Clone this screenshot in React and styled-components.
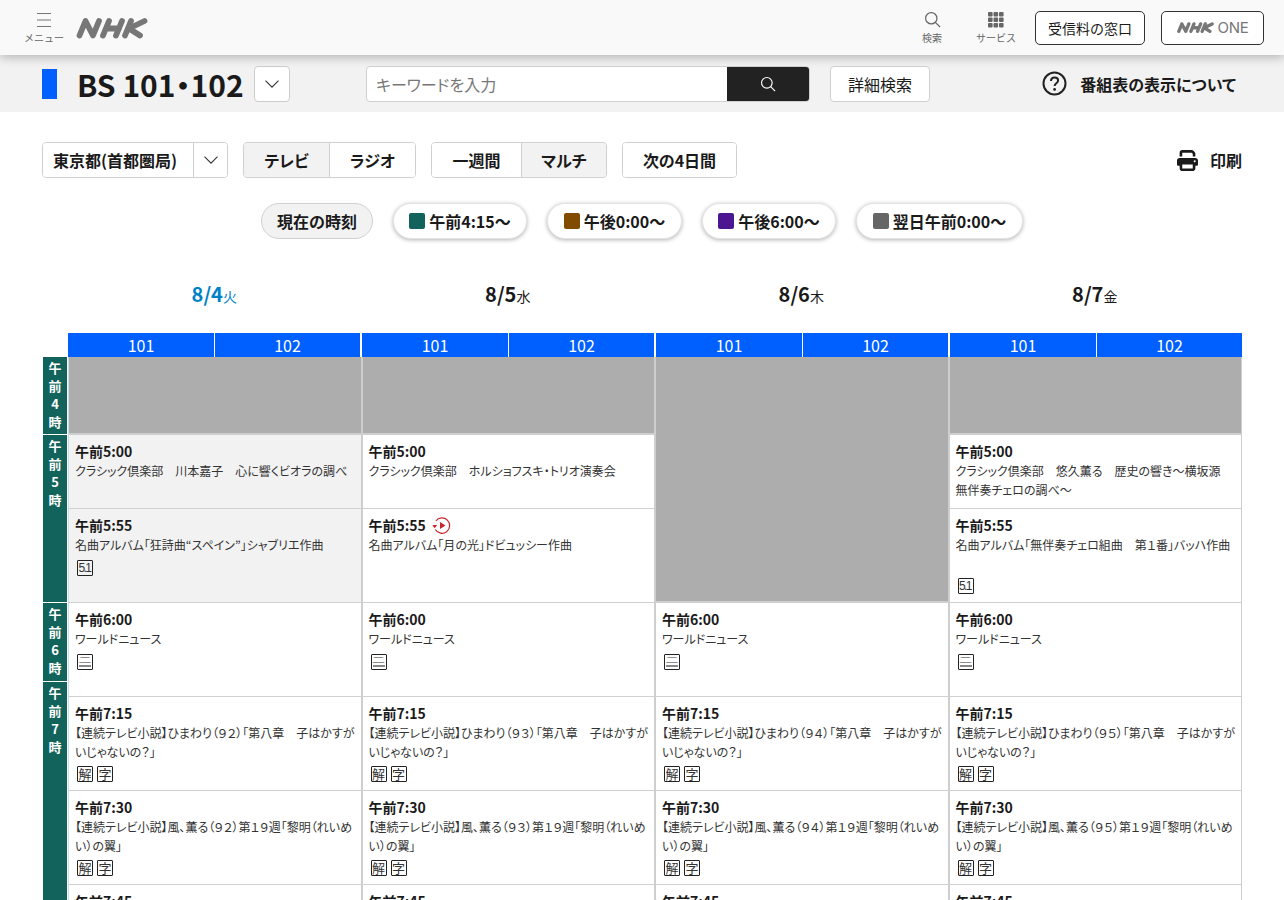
import React from 'react';
import styled, { createGlobalStyle } from 'styled-components';

const Global = createGlobalStyle`
  html, body { margin: 0; padding: 0; background: #fff; }
  body {
    font-family: "Noto Sans CJK JP", "Noto Sans", sans-serif;
    color: #1a1a1a;
    font-feature-settings: "palt";
  }
  * { box-sizing: border-box; }
`;

const Page = styled.div`
  width: 1284px;
  height: 900px;
  overflow: hidden;
  position: relative;
`;

const TopBar = styled.header`
  height: 55px;
  background: #f9f9f9;
  box-shadow: 0 2px 10px rgba(0, 0, 0, 0.28);
  display: flex;
  align-items: center;
  padding: 0 20px 0 24px;
  position: relative;
  z-index: 2;
`;

const MenuButton = styled.div`
  width: 40px;
  display: flex;
  flex-direction: column;
  align-items: center;
  gap: 4px;
  color: #666;
`;

const TinyLabel = styled.span`
  font-size: 10px;
  line-height: 12px;
  color: #666;
  white-space: nowrap;
  font-feature-settings: normal;
`;

const LogoWrap = styled.div`
  margin-left: 12px;
  width: 72px;
  height: 24px;
`;

const TopSpacer = styled.div`
  flex: 1;
`;

const TopAction = styled.div`
  display: flex;
  flex-direction: column;
  align-items: center;
  gap: 4px;
  width: 40px;
  margin-right: ${(p) => p.$gap}px;
`;

const OutlineLink = styled.div`
  height: 34px;
  width: ${(p) => p.$w}px;
  margin-left: ${(p) => p.$ml || 0}px;
  border: 1px solid #333;
  border-radius: 5px;
  background: #fff;
  display: flex;
  align-items: center;
  justify-content: center;
  gap: 4px;
  font-size: 14px;
  color: #1a1a1a;
  font-feature-settings: normal;
`;

const OneText = styled.span`
  color: #777;
  font-family: "Inter", sans-serif;
  font-size: 15px;
  letter-spacing: -0.3px;
`;

const SubBar = styled.div`
  height: 57px;
  background: #f2f2f2;
  display: flex;
  align-items: center;
  padding: 0 48px 0 42px;
`;

const ChannelMark = styled.div`
  width: 15px;
  height: 30px;
  background: #0060ff;
`;

const ChannelTitle = styled.h1`
  margin: 0 0 0 20px;
  font-size: 30px;
  font-weight: 700;
  line-height: 36px;
  white-space: nowrap;
  width: 177px;
`;

const ChannelSelect = styled.div`
  width: 36px;
  height: 36px;
  background: #fff;
  border: 1px solid #ccc;
  border-radius: 4px;
  display: flex;
  align-items: center;
  justify-content: center;
`;

const SearchBox = styled.div`
  margin-left: 76px;
  width: 444px;
  height: 36px;
  display: flex;
  background: #fff;
  border: 1px solid #d0d0d0;
  border-radius: 4px;
  overflow: hidden;
`;

const SearchPlaceholder = styled.div`
  flex: 1;
  font-size: 16px;
  line-height: 34px;
  padding-left: 9px;
  color: #777;
`;

const SearchButton = styled.div`
  width: 82px;
  background: #222;
  display: flex;
  align-items: center;
  justify-content: center;
`;

const DetailButton = styled.div`
  margin-left: 20px;
  width: 100px;
  height: 36px;
  background: #fff;
  border: 1px solid #d0d0d0;
  border-radius: 4px;
  font-size: 16px;
  display: flex;
  align-items: center;
  justify-content: center;
`;

const HelpLink = styled.div`
  margin-left: auto;
  display: flex;
  align-items: center;
  gap: 13px;
  font-size: 16px;
  font-weight: 700;
`;

const Toolbar = styled.div`
  margin-top: 30px;
  padding: 0 42px;
  height: 36px;
  display: flex;
  align-items: stretch;
`;

const Segment = styled.div`
  display: flex;
  border: 1px solid #d0d0d0;
  border-radius: 4px;
  margin-right: ${(p) => p.$mr}px;
  overflow: hidden;
  background: #fff;
`;

const SegmentItem = styled.div`
  width: ${(p) => p.$w}px;
  padding-right: ${(p) => p.$pr || 0}px;
  display: flex;
  align-items: center;
  justify-content: center;
  font-size: 16px;
  font-weight: 700;
  background: ${(p) => (p.$active ? '#f2f2f2' : '#fff')};
  & + & {
    border-left: 1px solid #d0d0d0;
  }
`;

const PrintLink = styled.div`
  margin-left: auto;
  display: flex;
  align-items: center;
  gap: 12px;
  font-size: 16px;
  font-weight: 700;
`;

const PillRow = styled.div`
  margin-top: 25px;
  display: flex;
  justify-content: center;
  gap: 20px;
  height: 36px;
`;

const Pill = styled.div`
  height: 36px;
  width: ${(p) => p.$w}px;
  border-radius: 18px;
  display: flex;
  align-items: center;
  justify-content: center;
  gap: 4px;
  font-size: 16px;
  font-weight: 700;
  white-space: nowrap;
  background: ${(p) => (p.$now ? '#f2f2f2' : '#fff')};
  border: 1px solid ${(p) => (p.$now ? '#d0d0d0' : '#e4e4e4')};
  box-shadow: ${(p) => (p.$now ? 'none' : '0 1px 4px rgba(0,0,0,0.3)')};
`;

const Swatch = styled.span`
  width: 16px;
  height: 16px;
  border-radius: 2px;
  background: ${(p) => p.$c};
`;

const DateRow = styled.div`
  margin: 42px 42px 0 67.5px;
  height: 25px;
  display: grid;
  grid-template-columns: repeat(4, 293.5px);
`;

const DateLabel = styled.div`
  text-align: center;
  font-size: 20px;
  font-weight: 700;
  line-height: 25px;
  color: ${(p) => (p.$today ? '#0082c8' : '#1a1a1a')};
`;

const DateWeek = styled.span`
  font-size: 14px;
  font-weight: 400;
`;

const ChannelRow = styled.div`
  margin: 27px 42px 0 68px;
  height: 24px;
  display: grid;
  grid-template-columns: repeat(4, 292px);
  gap: 2px;
`;

const ChannelPair = styled.div`
  display: grid;
  grid-template-columns: 146px 146px;
  background: #0060ff;
`;

const ChannelCell = styled.div`
  color: #fff;
  font-size: 16px;
  line-height: 24px;
  text-align: center;
  & + & {
    border-left: 1px solid #fff;
  }
`;

const Schedule = styled.div`
  margin-left: 43px;
  display: flex;
  align-items: flex-start;
`;

const HourColumn = styled.div`
  width: 24px;
  margin-right: 1px;
  display: flex;
  flex-direction: column;
  gap: 1px;
  flex: none;
`;

const HourBlock = styled.div`
  height: ${(p) => p.$h}px;
  background: #12635b;
  color: #fff;
  font-size: 13px;
  font-weight: 700;
  line-height: 18px;
  text-align: center;
  padding-top: 2px;
`;

const HourChar = styled.div`
  display: block;
`;

const DayColumn = styled.div`
  width: 293.5px;
  flex: none;
  border-left: 1px solid ${(p) => (p.$first ? '#c6dfe0' : '#cecece')};
  border-right: 1px solid #cecece;
  display: flex;
  flex-direction: column;
`;

const Blank = styled.div`
  height: ${(p) => p.$h}px;
  background: #adadad;
  border-bottom: 2px solid #cecece;
`;

const Program = styled.div`
  height: ${(p) => p.$h}px;
  background: ${(p) => (p.$past ? '#f2f2f2' : '#fff')};
  border-bottom: 1px solid #d0d0d0;
  padding: 6px 5px 0 6px;
`;

const TimeLine = styled.div`
  display: flex;
  align-items: center;
  gap: 6px;
  font-size: 14px;
  font-weight: 700;
  line-height: 21px;
  height: 21px;
`;

const Title = styled.div`
  font-size: 12px;
  line-height: 18.6px;
  color: #333;
`;

const BadgeRow = styled.div`
  display: flex;
  gap: 4px;
  margin: ${(p) => p.$mt ?? 5}px 0 0 2px;
`;

const Badge = styled.span`
  width: 16px;
  height: 16px;
  border: 1px solid #222;
  border-radius: 1px;
  font-size: 13px;
  line-height: 14px;
  color: #333;
  display: inline-flex;
  align-items: center;
  justify-content: center;
  position: relative;
  font-feature-settings: normal;
`;

const BadgeSmall = styled(Badge)`
  font-size: 12px;
  letter-spacing: -1.6px;
  padding-right: 1px;
  font-family: "Liberation Sans", sans-serif;
`;

const BadgeTwo = styled(Badge)`
  align-items: flex-start;
`;

const BadgeTwoGlyph = styled.span`
  display: block;
  font-size: 13px;
  line-height: 13px;
  margin-top: 1px;
  transform: scaleY(0.5);
  transform-origin: top center;
`;

const BadgeRule = styled.span`
  position: absolute;
  left: 1px;
  right: 1px;
  bottom: 2px;
  height: 2px;
  background: #888;
`;

const Chevron = ({ size = 16 }) => (
  <svg width={size} height={size} viewBox="0 0 16 16" fill="none" stroke="#333" strokeWidth="1.1">
    <path d="M1.500 4.700 8 11.200l6.500-6.500" />
  </svg>
);

const SearchIcon = ({ color, size }) => (
  <svg width={size} height={size} viewBox="0 0 18 18" fill="none" stroke={color} strokeWidth="1.3">
    <circle cx="7.700" cy="7.700" r="6" />
    <path d="m12 12 5 5" />
  </svg>
);

const nhkPaths = (
  <>
    <path d="M3.500 19.500 9.500 5 17 19.500 23 5" />
    <path d="M33 5 27 19.500M46 5 40 19.500M30 12.500h13" />
    <path d="M55 5 49 19.500M68.500 5 53 12.500 64 19.500" />
  </>
);

const NhkLogo = () => (
  <svg width="72" height="24" viewBox="0 0 72 24" fill="none" stroke="#777" strokeWidth="5.800" strokeLinecap="round" strokeLinejoin="round">
    {nhkPaths}
  </svg>
);

const SmallNhkLogo = () => (
  <svg width="37" height="13" viewBox="0 0 72 24" fill="none" stroke="#777" strokeWidth="6.500" strokeLinecap="round" strokeLinejoin="round">
    {nhkPaths}
  </svg>
);

const GridIcon = () => (
  <svg width="16" height="16" viewBox="0 0 16 16" fill="#666">
    {[0, 5.5, 11].flatMap((y) =>
      [0, 5.5, 11].map((x) => <rect key={`${x}-${y}`} x={x} y={y} width="4.600" height="4.600" rx="1" />)
    )}
  </svg>
);

const HamburgerIcon = () => (
  <svg width="16" height="16" viewBox="0 0 16 16" stroke="#777" strokeWidth="1.200">
    <path d="M1 1.500h14M1 8h14M1 14.500h14" />
  </svg>
);

const HelpIcon = () => (
  <svg width="25" height="25" viewBox="0 0 25 25" fill="none">
    <circle cx="12.500" cy="12.500" r="11" stroke="#222" strokeWidth="2" />
    <path d="M9 10c0-2.200 1.600-3.500 3.600-3.500 2 0 3.500 1.200 3.500 3 0 2.800-3.500 2.800-3.500 5.600" stroke="#222" strokeWidth="2" />
    <circle cx="12.600" cy="18.400" r="1.400" fill="#222" />
  </svg>
);

const PrintIcon = () => (
  <svg width="21" height="21" viewBox="0 0 512 512" fill="#1a1a1a">
    <path d="M128 0C92.700 0 64 28.700 64 64v96h64V64h226.700L384 93.300V160h64V93.300c0-17-6.700-33.300-18.700-45.300L400 18.700C388 6.700 371.700 0 354.700 0H128zM384 352v96H128v-96h256zm64 32h32c17.700 0 32-14.300 32-32V256c0-35.300-28.700-64-64-64H64c-35.300 0-64 28.700-64 64v96c0 17.700 14.300 32 32 32h32v64c0 35.300 28.700 64 64 64h256c35.300 0 64-28.700 64-64v-64zm-16-136a24 24 0 1 1 0 48 24 24 0 1 1 0-48z" />
  </svg>
);

const ReplayIcon = () => (
  <svg width="19" height="19" viewBox="0 0 19 19" fill="none">
    <path d="M3.800 5A7.700 7.700 0 1 1 3.300 13.500" stroke="#c8242b" strokeWidth="1.200" />
    <path d="M.3 9h4.800L2.700 12.200z" fill="#c8242b" />
    <path d="M8 6l5.500 3.500L8 13z" fill="#c8242b" />
  </svg>
);

const Mark = ({ k }) => {
  if (k === '5.1') return <BadgeSmall>5.1</BadgeSmall>;
  if (k === '二') return <BadgeTwo><BadgeTwoGlyph>二</BadgeTwoGlyph><BadgeRule /></BadgeTwo>;
  return <Badge>{k}</Badge>;
};

const Prog = ({ h, past, time, title, marks, mt, replay }) => (
  <Program $h={h} $past={past}>
    <TimeLine>
      {time}
      {replay && <ReplayIcon />}
    </TimeLine>
    <Title>{title}</Title>
    {marks && (
      <BadgeRow $mt={mt}>
        {marks.map((m) => (
          <Mark key={m} k={m} />
        ))}
      </BadgeRow>
    )}
  </Program>
);

const hours = [
  { h: 77, t: '午前4時'.split('') },
  { h: 167, t: '午前5時'.split('') },
  { h: 78, t: '午前6時'.split('') },
  { h: 260, t: '午前7時'.split('') },
];

const himawari = (n) => `【連続テレビ小説】ひまわり（${n}）「第八章　子はかすがいじゃないの？」`;
const kaoru = (n) => `【連続テレビ小説】風、薫る（${n}）第１９週「黎明（れいめい）の翼」`;

const morning = (a) => (
  <>
    <Prog h={94} time="午前6:00" title="ワールドニュース" marks={['二']} />
    <Prog h={94} time="午前7:15" title={himawari(a)} marks={['解', '字']} />
    <Prog h={94} time="午前7:30" title={kaoru(a)} marks={['解', '字']} />
    <Prog h={94} time="午前7:45" title="" />
  </>
);

const days = [
  {
    first: true,
    n: '９２',
    top: (
      <>
        <Blank $h={78} />
        <Prog h={74} past time="午前5:00" title="クラシック倶楽部　川本嘉子　心に響くビオラの調べ" />
        <Prog h={94} past time="午前5:55" title="名曲アルバム「狂詩曲“スペイン”」シャブリエ作曲" marks={['5.1']} />
      </>
    ),
  },
  {
    n: '９３',
    top: (
      <>
        <Blank $h={78} />
        <Prog h={74} time="午前5:00" title="クラシック倶楽部　ホルショフスキ・トリオ演奏会" />
        <Prog h={94} replay time="午前5:55" title="名曲アルバム「月の光」ドビュッシー作曲" />
      </>
    ),
  },
  { n: '９４', top: <Blank $h={246} /> },
  {
    n: '９５',
    top: (
      <>
        <Blank $h={78} />
        <Prog h={74} time="午前5:00" title="クラシック倶楽部　悠久薫る　歴史の響き～横坂源　無伴奏チェロの調べ～" />
        <Prog h={94} time="午前5:55" title="名曲アルバム「無伴奏チェロ組曲　第１番」バッハ作曲" marks={['5.1']} mt={23} />
      </>
    ),
  },
];

const dates = [
  ['8/4', '火', true],
  ['8/5', '水'],
  ['8/6', '木'],
  ['8/7', '金'],
];

export default function App() {
  return (
    <Page>
      <Global />
      <TopBar>
        <MenuButton>
          <HamburgerIcon />
          <TinyLabel>メニュー</TinyLabel>
        </MenuButton>
        <LogoWrap>
          <NhkLogo />
        </LogoWrap>
        <TopSpacer />
        <TopAction $gap={24}>
          <SearchIcon color="#666" size={17} />
          <TinyLabel>検索</TinyLabel>
        </TopAction>
        <TopAction $gap={0}>
          <GridIcon />
          <TinyLabel>サービス</TinyLabel>
        </TopAction>
        <OutlineLink $w={110} $ml={19}>受信料の窓口</OutlineLink>
        <OutlineLink $w={103} $ml={16}>
          <SmallNhkLogo />
          <OneText>ONE</OneText>
        </OutlineLink>
      </TopBar>
      <SubBar>
        <ChannelMark />
        <ChannelTitle>BS 101・102</ChannelTitle>
        <ChannelSelect>
          <Chevron />
        </ChannelSelect>
        <SearchBox>
          <SearchPlaceholder>キーワードを入力</SearchPlaceholder>
          <SearchButton>
            <SearchIcon color="#fff" size={16} />
          </SearchButton>
        </SearchBox>
        <DetailButton>詳細検索</DetailButton>
        <HelpLink>
          <HelpIcon />
          番組表の表示について
        </HelpLink>
      </SubBar>
      <Toolbar>
        <Segment $mr={15}>
          <SegmentItem $w={150} $pr={6}>東京都(首都圏局)</SegmentItem>
          <SegmentItem $w={34}>
            <Chevron />
          </SegmentItem>
        </Segment>
        <Segment $mr={15}>
          <SegmentItem $w={85} $active>テレビ</SegmentItem>
          <SegmentItem $w={86}>ラジオ</SegmentItem>
        </Segment>
        <Segment $mr={15}>
          <SegmentItem $w={89}>一週間</SegmentItem>
          <SegmentItem $w={85} $active>マルチ</SegmentItem>
        </Segment>
        <Segment $mr={0}>
          <SegmentItem $w={113}>次の4日間</SegmentItem>
        </Segment>
        <PrintLink>
          <PrintIcon />
          印刷
        </PrintLink>
      </Toolbar>
      <PillRow>
        <Pill $now $w={112}>現在の時刻</Pill>
        <Pill $w={134}>
          <Swatch $c="#12635b" />
          午前4:15～
        </Pill>
        <Pill $w={135}>
          <Swatch $c="#824c00" />
          午後0:00～
        </Pill>
        <Pill $w={134}>
          <Swatch $c="#4c1690" />
          午後6:00～
        </Pill>
        <Pill $w={167}>
          <Swatch $c="#666" />
          翌日午前0:00～
        </Pill>
      </PillRow>
      <DateRow>
        {dates.map(([d, w, today]) => (
          <DateLabel key={d} $today={today}>
            {d}
            <DateWeek>{w}</DateWeek>
          </DateLabel>
        ))}
      </DateRow>
      <ChannelRow>
        {dates.map(([d]) => (
          <ChannelPair key={d}>
            <ChannelCell>101</ChannelCell>
            <ChannelCell>102</ChannelCell>
          </ChannelPair>
        ))}
      </ChannelRow>
      <Schedule>
        <HourColumn>
          {hours.map((b) => (
            <HourBlock key={b.t.join('')} $h={b.h}>
              {b.t.map((c, i) => (
                <HourChar key={i}>{c}</HourChar>
              ))}
            </HourBlock>
          ))}
        </HourColumn>
        {days.map((d) => (
          <DayColumn key={d.n} $first={d.first}>
            {d.top}
            {morning(d.n)}
          </DayColumn>
        ))}
      </Schedule>
    </Page>
  );
}
